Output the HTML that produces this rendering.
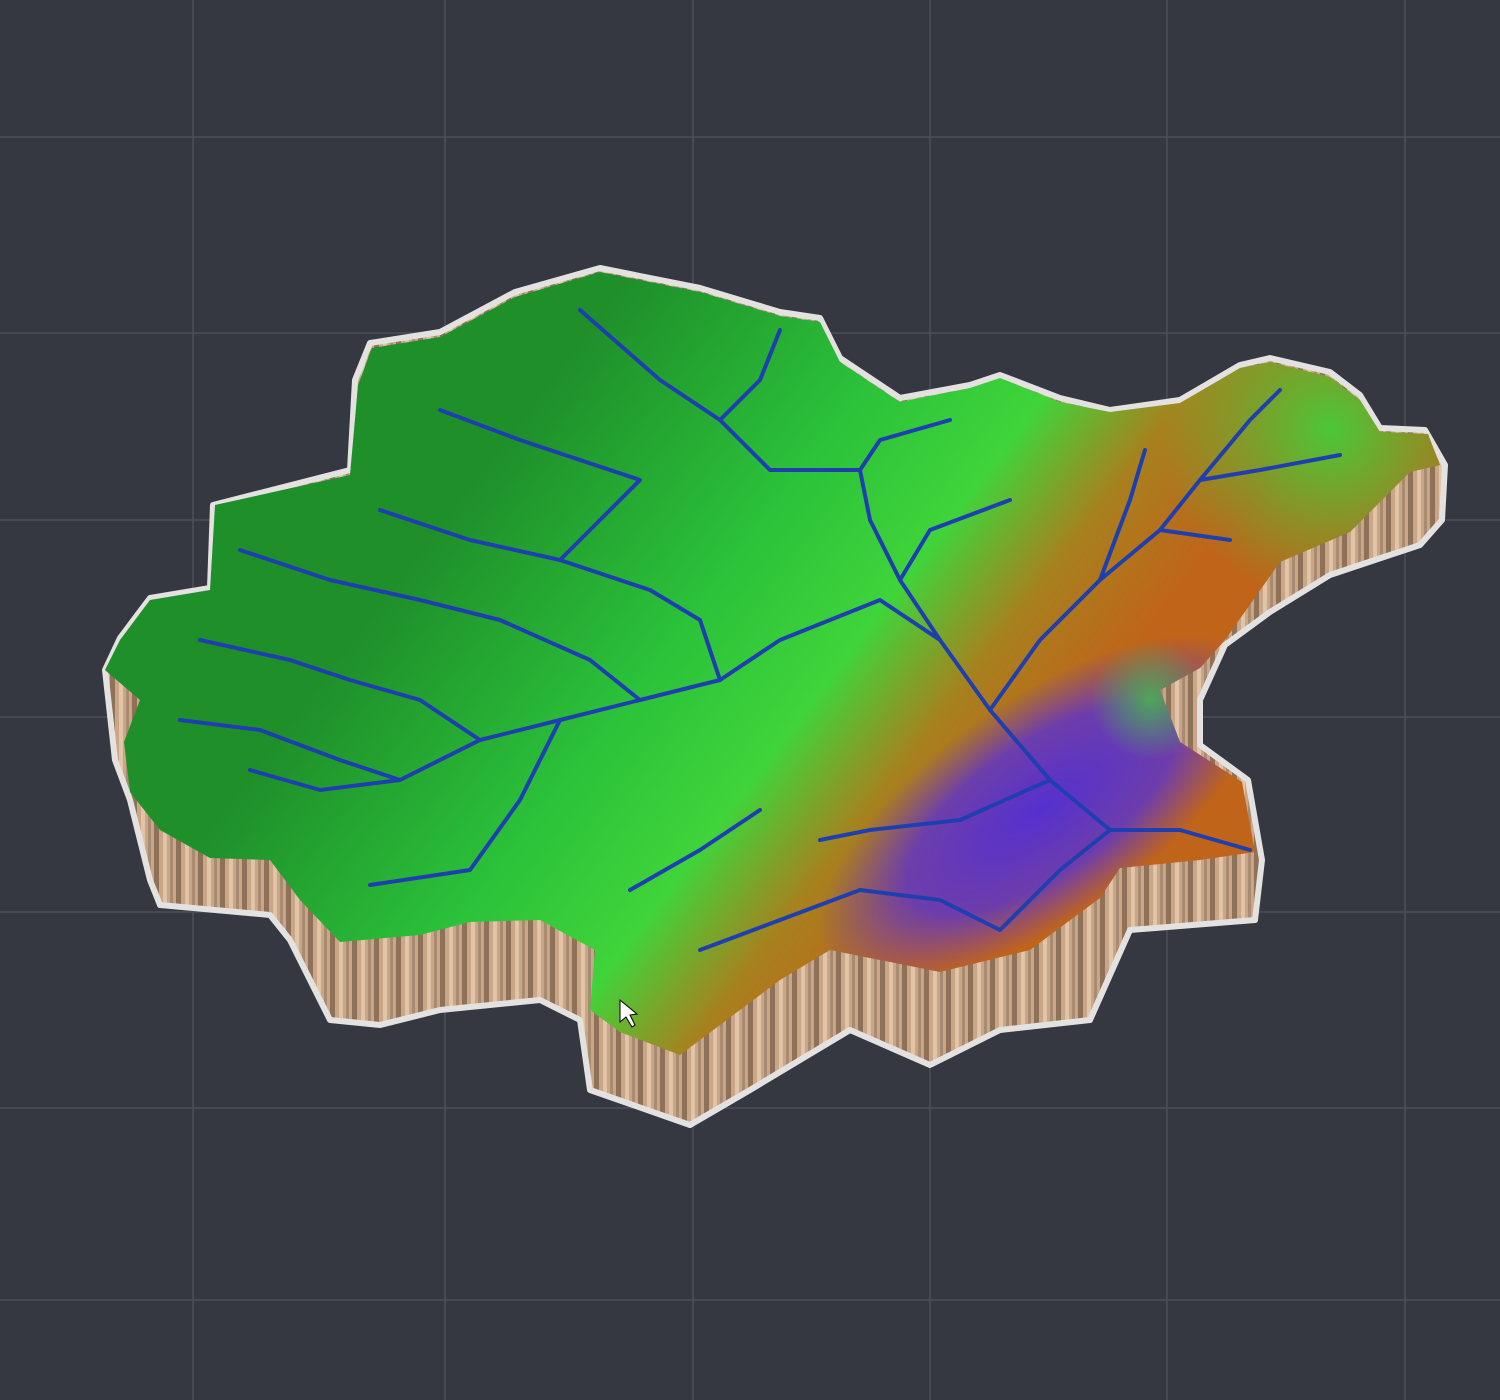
<!DOCTYPE html>
<html><head><meta charset="utf-8"><style>
html,body{margin:0;padding:0;background:#353841;}
svg{display:block}
</style></head><body>
<svg width="1500" height="1400" viewBox="0 0 1500 1400" xmlns="http://www.w3.org/2000/svg">
<defs>
<pattern id="stripes" width="22" height="10" patternUnits="userSpaceOnUse">
<rect width="22" height="10" fill="#c9a688"/>
<rect x="0" width="5" height="10" fill="#8f7158"/>
<rect x="9" width="4" height="10" fill="#e2c4a6"/>
<rect x="16" width="3" height="10" fill="#a88b70"/>
</pattern>
<linearGradient id="top" x1="460" y1="500" x2="960" y2="880" gradientUnits="userSpaceOnUse">
<stop offset="0" stop-color="#1f8f2a"/>
<stop offset="0.4" stop-color="#2bc13a"/>
<stop offset="0.64" stop-color="#3fd43a"/>
<stop offset="0.82" stop-color="#a8801e"/>
<stop offset="1" stop-color="#c0641a"/>
</linearGradient>
<radialGradient id="ne" cx="1330" cy="430" r="170" gradientUnits="userSpaceOnUse">
<stop offset="0" stop-color="#3ed23a" stop-opacity="0.9"/>
<stop offset="1" stop-color="#3ed23a" stop-opacity="0"/>
</radialGradient>
<radialGradient id="pu" cx="0" cy="0" r="1" gradientUnits="userSpaceOnUse" gradientTransform="translate(1040 810) rotate(-35) scale(260 110)">
<stop offset="0" stop-color="#5530d0"/>
<stop offset="0.6" stop-color="#5f36c4" stop-opacity="0.85"/>
<stop offset="1" stop-color="#6a3cc0" stop-opacity="0"/>
</radialGradient>
<radialGradient id="gr" cx="1150" cy="700" r="60" gradientUnits="userSpaceOnUse">
<stop offset="0" stop-color="#3ed23a" stop-opacity="0.7"/>
<stop offset="1" stop-color="#3ed23a" stop-opacity="0"/>
</radialGradient>
</defs>
<g stroke="#4b4f59" stroke-width="1.5">
<line x1="193" y1="0" x2="193" y2="1400"/><line x1="445" y1="0" x2="445" y2="1400"/>
<line x1="693" y1="0" x2="693" y2="1400"/><line x1="930" y1="0" x2="930" y2="1400"/>
<line x1="1167" y1="0" x2="1167" y2="1400"/><line x1="1405" y1="0" x2="1405" y2="1400"/>
<line x1="0" y1="137" x2="1500" y2="137"/><line x1="0" y1="333" x2="1500" y2="333"/>
<line x1="0" y1="520" x2="1500" y2="520"/><line x1="0" y1="717" x2="1500" y2="717"/>
<line x1="0" y1="912" x2="1500" y2="912"/><line x1="0" y1="1108" x2="1500" y2="1108"/>
<line x1="0" y1="1300" x2="1500" y2="1300"/>
</g>
<path d="M105,670 L115,760 L130,800 L150,880 L160,905 L270,915 L290,940 L330,1020 L380,1025 L440,1010 L540,1000 L580,1020 L590,1090 L690,1125 L750,1090 L850,1030 L930,1065 L1000,1030 L1090,1020 L1130,930 L1255,920 L1262,860 L1248,780 L1200,745 L1200,700 L1225,645 L1270,612 L1330,575 L1420,545 L1442,520 L1445,465 L1425,430 L1380,428 L1360,395 L1330,372 L1270,358 L1240,365 L1180,400 L1110,410 L1060,398 L1000,375 L970,385 L900,398 L840,358 L820,318 L780,312 L700,288 L600,268 L515,292 L440,332 L370,343 L355,380 L350,470 L260,493 L213,505 L210,588 L150,598 L120,638 Z" fill="url(#stripes)" stroke="#e4e2e0" stroke-width="6" stroke-linejoin="round"/>
<path id="tp" d="M105,670 L120,640 L150,600 L210,590 L215,505 L260,495 L350,475 L358,385 L372,348 L440,337 L515,297 L600,272 L700,292 L780,316 L820,322 L840,362 L900,402 L970,388 L1000,378 L1060,402 L1110,412 L1180,403 L1240,368 L1270,362 L1330,377 L1360,400 L1380,432 L1428,434 L1440,465 L1410,472 L1350,532 L1280,562 L1225,640 L1200,668 L1160,690 L1180,742 L1242,782 L1255,852 L1200,860 L1120,868 L1100,898 L1030,950 L940,972 L870,958 L830,950 L780,980 L700,1040 L680,1055 L620,1032 L590,1010 L595,950 L540,920 L470,922 L420,935 L340,942 L300,900 L270,860 L210,858 L160,830 L130,792 L124,742 L140,700 Z" fill="url(#top)"/>
<clipPath id="cp"><path d="M105,670 L120,640 L150,600 L210,590 L215,505 L260,495 L350,475 L358,385 L372,348 L440,337 L515,297 L600,272 L700,292 L780,316 L820,322 L840,362 L900,402 L970,388 L1000,378 L1060,402 L1110,412 L1180,403 L1240,368 L1270,362 L1330,377 L1360,400 L1380,432 L1428,434 L1440,465 L1410,472 L1350,532 L1280,562 L1225,640 L1200,668 L1160,690 L1180,742 L1242,782 L1255,852 L1200,860 L1120,868 L1100,898 L1030,950 L940,972 L870,958 L830,950 L780,980 L700,1040 L680,1055 L620,1032 L590,1010 L595,950 L540,920 L470,922 L420,935 L340,942 L300,900 L270,860 L210,858 L160,830 L130,792 L124,742 L140,700 Z"/></clipPath>
<g clip-path="url(#cp)">
<rect x="0" y="0" width="1500" height="1400" fill="url(#ne)"/>
<rect x="0" y="0" width="1500" height="1400" fill="url(#pu)"/>
<circle cx="1150" cy="700" r="60" fill="url(#gr)"/>
</g>
<g fill="none" stroke="#1f3fb0" stroke-width="4" stroke-linecap="round" stroke-linejoin="round">
<path d="M1250,850 L1180,830 L1110,830 L1050,780 L990,710 L940,640 L900,580 L870,520 L860,470 L770,470 L720,420 L660,380 L580,310"/>
<path d="M990,710 L1040,640 L1100,580 L1160,530 L1200,480 L1250,420 L1280,390"/>
<path d="M1100,580 L1130,500 L1145,450"/>
<path d="M1200,480 L1260,470 L1340,455"/>
<path d="M1160,530 L1230,540"/>
<path d="M940,640 L880,600 L780,640 L720,680 L640,700 L560,720 L480,740 L400,780 L320,790 L250,770"/>
<path d="M720,680 L700,620 L650,590 L560,560 L470,540 L380,510"/>
<path d="M640,700 L590,660 L500,620 L420,600 L330,580 L240,550"/>
<path d="M900,580 L930,530 L1010,500"/>
<path d="M1110,830 L1060,870 L1000,930 L940,900 L860,890 L780,920 L700,950"/>
<path d="M1050,780 L960,820 L870,830 L820,840"/>
<path d="M480,740 L420,700 L350,680 L290,660 L200,640"/>
<path d="M560,720 L520,800 L470,870 L370,885"/>
<path d="M760,810 L700,850 L630,890"/>
<path d="M860,470 L880,440 L950,420"/>
<path d="M720,420 L760,380 L780,330"/>
<path d="M560,560 L600,520 L640,480 L520,440 L440,410"/>
<path d="M400,780 L340,760 L260,730 L180,720"/>
</g>
<path d="M620,1000 L620,1022 L626,1017 L632,1027 L635,1025 L630,1015 L637,1014 Z" fill="#fff" stroke="#000" stroke-width="1"/>
</svg>
</body></html>
